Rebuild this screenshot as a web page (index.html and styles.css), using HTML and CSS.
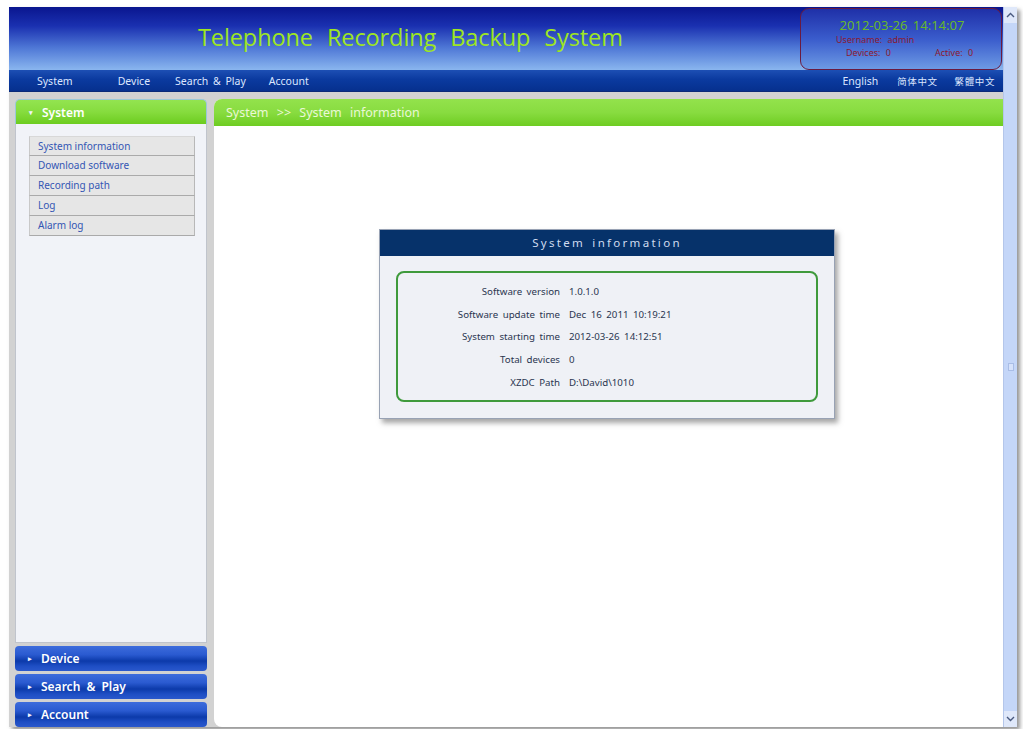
FILE: index.html
```html
<!DOCTYPE html>
<html>
<head>
<meta charset="utf-8">
<title>Telephone Recording Backup System</title>
<link rel="stylesheet" href="styles.css">
</head>
<body>
<div class="window">
  <div class="page">
    <header class="banner">
      <h1 class="title">Telephone Recording Backup System</h1>
      <div class="status">
        <div class="clock">2012-03-26 14:14:07</div>
        <div class="user">Username: admin</div>
        <div class="counts"><span>Devices: 0</span><span>Active: 0</span></div>
      </div>
    </header>
    <nav class="menubar">
      <ul class="menu">
        <li class="m-system">System</li>
        <li class="m-device">Device</li>
        <li class="m-search">Search &amp; Play</li>
        <li class="m-account">Account</li>
      </ul>
      <ul class="langs">
        <li>English</li>
        <li>简体中文</li>
        <li>繁體中文</li>
      </ul>
    </nav>
    <div class="main">
      <aside class="sidebar">
        <div class="group open">
          <div class="group-head green"><span class="caret">▾</span>System</div>
          <div class="group-body">
            <ul class="links">
              <li>System information</li>
              <li>Download software</li>
              <li>Recording path</li>
              <li>Log</li>
              <li>Alarm log</li>
            </ul>
          </div>
        </div>
        <div class="group-head blue"><span class="caret">▸</span>Device</div>
        <div class="group-head blue"><span class="caret">▸</span>Search &amp; Play</div>
        <div class="group-head blue"><span class="caret">▸</span>Account</div>
      </aside>
      <section class="content">
        <div class="crumb">System &gt;&gt; System information</div>
        <div class="content-body">
          <div class="dialog">
            <div class="dialog-head">System information</div>
            <div class="dialog-body">
              <div class="info">
                <div class="row"><span class="k">Software version</span><span class="v">1.0.1.0</span></div>
                <div class="row"><span class="k">Software update time</span><span class="v">Dec 16 2011 10:19:21</span></div>
                <div class="row"><span class="k">System starting time</span><span class="v">2012-03-26 14:12:51</span></div>
                <div class="row"><span class="k">Total devices</span><span class="v">0</span></div>
                <div class="row"><span class="k">XZDC Path</span><span class="v">D:\David\1010</span></div>
              </div>
            </div>
          </div>
        </div>
      </section>
    </div>
  </div>
  <div class="scrollbar">
    <div class="arrow up">
      <svg width="9" height="6" viewBox="0 0 9 6"><path d="M1 5 L4.5 1.5 L8 5" fill="none" stroke="#4a5a80" stroke-width="1.4"/></svg>
    </div>
    <div class="track"><span class="grip"></span></div>
    <div class="arrow down">
      <svg width="9" height="6" viewBox="0 0 9 6"><path d="M1 1 L4.5 4.5 L8 1" fill="none" stroke="#4a5a80" stroke-width="1.4"/></svg>
    </div>
  </div>
</div>
</body>
</html>
```

FILE: styles.css
```css
* { box-sizing: border-box; }

html, body {
  margin: 0;
  padding: 0;
  background: #ffffff;
  font-family: "Noto Sans", "Open Sans", "Noto Sans CJK SC", sans-serif;
}

body {
  padding: 7px 0 0 9px;
  height: 729px;
  overflow: hidden;
}

ul { list-style: none; margin: 0; padding: 0; }

.window {
  display: flex;
  width: 1008px;
  height: 720px;
  box-shadow: 3px 3px 4px rgba(60, 60, 60, 0.55);
}

.page {
  width: 994px;
  display: flex;
  flex-direction: column;
  background: #d2d2d2;
}

/* ---- banner ---- */
.banner {
  height: 63px;
  display: flex;
  align-items: stretch;
  background: linear-gradient(180deg, #0a168f 0%, #1a30b0 30%, #4f78d6 65%, #8ab6ef 100%);
}

.title {
  margin: 0;
  flex: 1;
  padding-left: 189px;
  padding-top: 13px;
  font-family: "Open Sans", "Noto Sans", sans-serif;
  font-weight: 400;
  font-size: 23.5px;
  line-height: 34px;
  word-spacing: 8px;
  color: #9ee622;
  letter-spacing: -0.1px;
}

.status {
  width: 202px;
  margin: 1px 1px 0 0;
  border: 1px solid #6a1a40;
  border-radius: 9px;
  background: linear-gradient(180deg, #1f30a8 0%, #3a5ccc 50%, #6d9ae4 100%);
  padding-top: 8px;
  color: #8a1a30;
  font-size: 9px;
  line-height: 13px;
}

.clock {
  text-align: center;
  color: #66b82a;
  font-size: 13px;
  line-height: 16px;
  padding-left: 2px;
  word-spacing: 2px;
}

.user { padding-left: 35px; word-spacing: 3px; }

.counts {
  display: flex;
  padding-left: 45px;
  gap: 44px;
  word-spacing: 3px;
}

/* ---- menu bar ---- */
.menubar {
  height: 22px;
  display: flex;
  justify-content: space-between;
  align-items: center;
  background: linear-gradient(180deg, #1d4fb4 0%, #0b3a9f 45%, #06308e 100%);
  border-bottom: 1px solid #0a2a78;
  font-size: 10.5px;
  color: #dce6ff;
}

.menu { display: flex; padding-left: 28px; }
.menu .m-system { margin-right: 45px; }
.menu .m-device { margin-right: 25px; }
.menu .m-search { margin-right: 23px; }
.menu .m-search { word-spacing: 2px; }

.langs { display: flex; gap: 17px; padding-right: 8px; }
.langs li:first-child { margin-right: 2px; }
.langs li:nth-child(n+2) { font-size: 9.5px; letter-spacing: 0.6px; }

/* ---- main area ---- */
.main {
  flex: 1;
  display: flex;
  padding: 7px 0 0 6px;
  gap: 7px;
  min-height: 0;
}

.sidebar {
  width: 192px;
  display: flex;
  flex-direction: column;
  gap: 3px;
}

.group {
  flex: 1;
  display: flex;
  flex-direction: column;
}

.group-head {
  height: 25px;
  display: flex;
  align-items: center;
  padding-left: 13px;
  font-size: 12px;
  font-weight: 600;
  color: #ffffff;
  word-spacing: 3px;
}

.caret {
  font-size: 7px;
  margin-right: 9px;
  color: #f0f4ff;
}

.group-head.green {
  background: linear-gradient(180deg, #93e450 0%, #86dc3e 50%, #6ccc20 100%);
  border: 1px solid #9ac8d8;
  border-bottom: none;
  border-radius: 5px 5px 0 0;
}

.group-head.blue {
  background: linear-gradient(180deg, #3d6cdc 0%, #2a5ad0 35%, #0c3aaa 60%, #1e4ec4 80%, #2a58cc 100%);
  border-radius: 4px;
}

.group-body {
  flex: 1;
  background: #f1f3f8;
  border: 1px solid #c0c4cc;
  border-top: none;
  padding: 12px 11px 0 13px;
}

.links li {
  height: 20px;
  line-height: 19px;
  padding-left: 8px;
  background: #e6e6e6;
  border: 1px solid #c9c9c9;
  border-top: none;
  border-right-color: #b8b8b8;
  border-bottom-color: #aaaaaa;
  font-size: 10px;
  color: #3456b4;
}
.links li:first-child { border-top: 1px solid #d8d8d8; }

/* ---- content ---- */
.content {
  flex: 1;
  display: flex;
  flex-direction: column;
  background: #ffffff;
  border-radius: 8px 0 0 8px;
  overflow: hidden;
}

.crumb {
  height: 27px;
  padding-left: 12px;
  display: flex;
  align-items: center;
  background: linear-gradient(180deg, #93e24c 0%, #88dc40 50%, #6ecc22 100%);
  color: #eaf8d6;
  font-size: 12.5px;
  word-spacing: 5px;
}

.content-body {
  flex: 1;
  display: flex;
  justify-content: center;
  align-items: flex-start;
  padding-top: 103px;
  padding-right: 3px;
}

.dialog {
  width: 456px;
  background: #eff1f6;
  border: 1px solid #98a2b4;
  box-shadow: 3px 4px 5px rgba(80, 80, 80, 0.5);
}

.dialog-head {
  height: 26px;
  line-height: 26px;
  text-align: center;
  background: #06326a;
  color: #cfdcf0;
  font-size: 11.5px;
  letter-spacing: 2.3px;
  word-spacing: 2px;
}

.dialog-body {
  padding: 15px 16px 16px 16px;
}

.info {
  border: 2px solid #3f9a3c;
  border-radius: 8px;
  padding: 7px 0 8px 0;
  height: 131px;
}

.row {
  display: flex;
  height: 22.8px;
  align-items: center;
  font-size: 9.7px;
  color: #2a3550;
  word-spacing: 2px;
}

.row .k {
  width: 162px;
  text-align: right;
}

.row .v { margin-left: 9px; }

/* ---- scrollbar ---- */
.scrollbar {
  width: 14px;
  display: flex;
  flex-direction: column;
  background: #c9d9f7;
  border-left: 1px solid #b4c6ea;
}

.arrow {
  height: 16px;
  display: flex;
  align-items: center;
  justify-content: center;
  background: #dfe8fa;
}

.track {
  flex: 1;
  display: flex;
  align-items: center;
  justify-content: center;
  background: #c4d6f8;
}

.grip {
  width: 6px;
  height: 8px;
  border: 1px solid #a9bde6;
  background: #d6e2fb;
}
```
